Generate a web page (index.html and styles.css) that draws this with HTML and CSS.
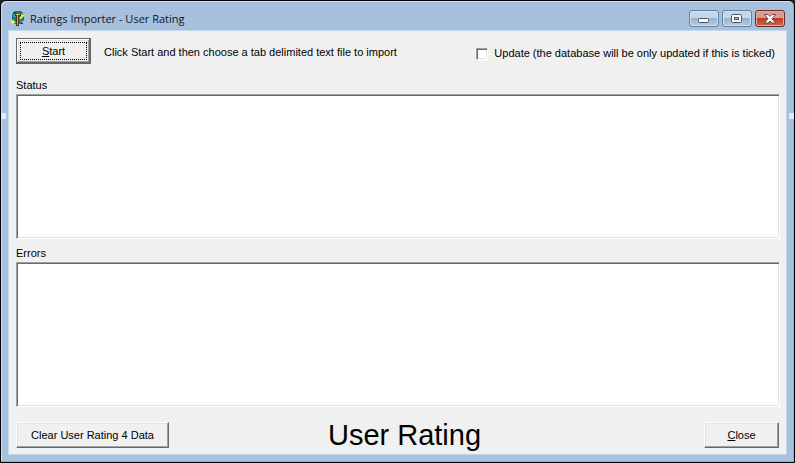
FILE: index.html
```html
<!DOCTYPE html>
<html lang="en">
<head>
    <meta charset="UTF-8">
    <title>Ratings Importer - User Rating</title>
    <link rel="stylesheet" href="styles.css">
</head>
<body>
    <div class="window">
        <span class="grip grip-left"></span>
        <span class="grip grip-right"></span>
        <header class="titlebar">
            <svg class="app-icon" width="16" height="16" viewBox="0 0 16 16">
                <path d="M5 0h6l2 2 1 3v4l-3 4H5l-3-3V4l1-2z" fill="#16787c"/>
                <path d="M4 3h2v3H3V4h1zM10 9h3v2h-3z" fill="#2ba0a0"/>
                <path d="M3 1h3v1H3zM11 12h2v1h-2z" fill="#123c48"/>
                <path d="M5 3h6v2H9v10H6V5H5z" fill="#4c3812"/>
                <path d="M7 4h1v10H7z" fill="#d8a838"/>
                <path d="M6 3h4v1H6z" fill="#e0c050"/>
                <path d="M12 2l1 2 2-1-1 2-3 3-2 0 2-3z" fill="#f0f040"/>
                <path d="M3 8l1 2 2 1-2 1-1 2-1-2-2-1 2-1z" fill="#f0f040"/>
            </svg>
            <h1 class="title">Ratings Importer - User Rating</h1>
            <div class="window-buttons">
                <button class="win-btn" type="button" aria-label="Minimize">
                    <svg width="12" height="10" viewBox="0 0 12 10">
                        <rect x=".5" y="4.500" width="10" height="4" rx="1" fill="#f8f8f8" stroke="#4b5263"/>
                    </svg>
                </button>
                <button class="win-btn" type="button" aria-label="Maximize">
                    <svg width="12" height="10" viewBox="0 0 12 10">
                        <rect x=".5" y=".5" width="10" height="8" rx="1" fill="#f8f8f8" stroke="#4b5263"/>
                        <rect x="3.500" y="3.500" width="4" height="2" fill="#a9c0dc" stroke="#4b5263"/>
                    </svg>
                </button>
                <button class="win-btn win-btn-close" type="button" aria-label="Close window">
                    <svg width="12" height="10" viewBox="0 0 12 10">
                        <path d="M.5 .5h3.500L6 2.500 8 .5h3.500L8 4.700l3.500 4.300H8L6 7 4 9H.5L4 4.700z" fill="#fff" stroke="#544450" stroke-width=".9"/>
                    </svg>
                </button>
            </div>
        </header>
        <main class="panel">
            <div class="top-row">
                <button class="btn btn-default" type="button"><span class="focus"><u>S</u>tart</span></button>
                <p class="hint">Click Start and then choose a tab delimited text file to import</p>
                <label class="check"><input type="checkbox">Update (the database will be only updated if this is ticked)</label>
            </div>
            <div class="field">
                <label for="status">Status</label>
                <textarea id="status"></textarea>
            </div>
            <div class="field">
                <label for="errors">Errors</label>
                <textarea id="errors"></textarea>
            </div>
            <footer class="bottom-row">
                <div class="side"><button class="btn btn-wide" type="button">Clear User Rating 4 Data</button></div>
                <h2 class="caption">User Rating</h2>
                <div class="side side-right"><button class="btn" type="button"><u>C</u>lose</button></div>
            </footer>
        </main>
    </div>
</body>
</html>
```
FILE: styles.css
```css
* {
    box-sizing: border-box;
}
body {
    margin: 0;
    background: #222;
    font-family: "Liberation Sans", Arial, sans-serif;
    font-size: 11px;
    line-height: 13px;
    color: #000;
}
.window {
    position: relative;
    display: flex;
    flex-direction: column;
    min-height: 100vh;
    padding: 0 7px 7px;
    background: #a7c0dd;
    border: 1px solid #000;
    border-radius: 6px 6px 0 0;
    box-shadow: inset -1px -1px 0 #5fc4dc, inset 1px 1px 0 #d3e0ef;
}
.grip {
    position: absolute;
    top: 112px;
    width: 5px;
    height: 6px;
    background: #dcebf8;
}
.grip-left {
    left: 0;
}
.grip-right {
    right: 0;
}
.titlebar {
    display: flex;
    align-items: center;
    height: 29px;
    padding: 6px 2px 0;
}
.title {
    flex: 1;
    margin: 0 0 0 4px;
    font-family: "Open Sans", "Noto Sans", sans-serif;
    font-size: 11px;
    font-weight: normal;
    line-height: 16px;
    color: #10141c;
}
.window-buttons {
    display: flex;
    gap: 3px;
}
.win-btn {
    display: flex;
    align-items: center;
    justify-content: center;
    width: 30px;
    height: 17px;
    padding: 0;
    border: 1px solid #64809f;
    border-radius: 3px;
    background: linear-gradient(#c6d7ea 0 50%, #98b3d1 50%, #b4cce6);
    box-shadow: inset 0 0 0 1px #d2e1f1;
}
.win-btn-close {
    border-color: #6b2a2c;
    background: linear-gradient(#dc9a8c 0 45%, #bc3b24 50%, #d4684a);
    box-shadow: inset 0 0 0 1px #e6ac9f;
}
.panel {
    flex: 1;
    display: flex;
    flex-direction: column;
    padding: 6px 6px 6px 7px;
    background: #f0f0f0;
    border: 1px solid #c4d6ea;
}
.top-row {
    display: flex;
    align-items: center;
    height: 27px;
    margin-bottom: 15px;
}
.btn {
    flex: none;
    width: 75px;
    height: 26px;
    padding: 0;
    border: 1px solid;
    border-color: #fff #696969 #696969 #fff;
    background: #f0f0f0;
    box-shadow: inset -1px -1px 0 #a0a0a0, inset 1px 1px 0 #e3e3e3;
    font: inherit;
    color: inherit;
}
.btn-wide {
    width: 153px;
}
.btn-default {
    padding: 3px;
    border-color: #646464;
    box-shadow: inset -1px -1px 0 #696969, inset 1px 1px 0 #fff, inset -2px -2px 0 #a0a0a0, inset 2px 2px 0 #e3e3e3;
}
.focus {
    display: block;
    height: 18px;
    border: 1px dotted #000;
    line-height: 16px;
}
.hint {
    margin: 4px auto 0 13px;
}
.check {
    display: flex;
    align-items: center;
    gap: 6px;
    margin: 6px 5px 0 0;
}
.check input {
    appearance: none;
    width: 12px;
    height: 12px;
    margin: 0;
    background: #fff;
    border: 1px solid;
    border-color: #a0a0a0 #fff #fff #a0a0a0;
    box-shadow: inset 1px 1px 0 #696969, inset -1px -1px 0 #e3e3e3;
}
.field {
    flex: 1;
    display: flex;
    flex-direction: column;
    gap: 2px;
    margin-bottom: 8px;
}
.field textarea {
    flex: 1;
    width: 100%;
    padding: 3px;
    resize: none;
    outline: none;
    font: inherit;
    background: #fff;
    border: 1px solid;
    border-color: #a0a0a0 #fff #fff #a0a0a0;
    border-radius: 0;
    box-shadow: inset 1px 1px 0 #696969, inset -1px -1px 0 #e3e3e3;
}
.bottom-row {
    display: flex;
    align-items: center;
    margin-top: 7px;
}
.side {
    flex: 1;
    display: flex;
}
.side-right {
    justify-content: flex-end;
    padding-right: 1px;
}
.caption {
    margin: 0 0 0 14px;
    font-size: 29px;
    font-weight: normal;
    line-height: 26px;
}
```
